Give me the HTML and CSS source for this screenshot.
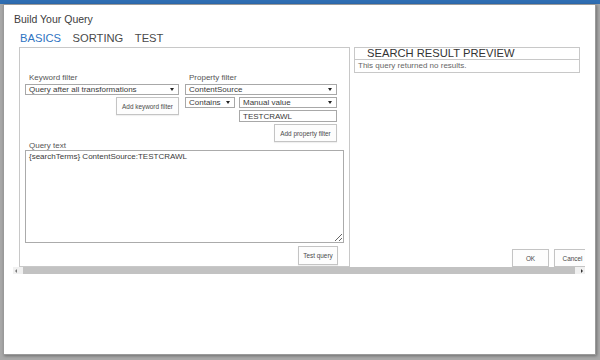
FILE: index.html
```html
<!DOCTYPE html>
<html lang="en">
<head>
  <meta charset="UTF-8">
  <meta name="viewport" content="width=device-width, initial-scale=1.0">
  <title>Build Your Query</title>
  <link rel="stylesheet" href="styles.css">
</head>
<body>

<div class="suite-bar"></div>

<div class="dialog">
  <div class="dialog-title">Build Your Query</div>

  <div class="tabs">
    <span class="tab active">BASICS</span>
    <span class="tab">SORTING</span>
    <span class="tab">TEST</span>
  </div>

  <div class="scroll-area">
    <div class="scroll-content">

      <div class="basics-panel">
        <div class="filters">
          <div class="filter-col keyword-col">
            <div class="field-label">Keyword filter</div>
            <div class="select"><span>Query after all transformations</span><span class="caret"></span></div>
            <button class="btn">Add keyword filter</button>
          </div>

          <div class="filter-col property-col">
            <div class="field-label">Property filter</div>
            <div class="select"><span>ContentSource</span><span class="caret"></span></div>
            <div class="select-row">
              <div class="select op-select"><span>Contains</span><span class="caret"></span></div>
              <div class="select value-select"><span>Manual value</span><span class="caret"></span></div>
            </div>
            <div class="text-input">TESTCRAWL</div>
            <button class="btn">Add property filter</button>
          </div>
        </div>

        <div class="field-label query-label">Query text</div>
        <textarea class="query-text" spellcheck="false">{searchTerms} ContentSource:TESTCRAWL</textarea>
        <div class="panel-actions">
          <button class="btn test-btn">Test query</button>
        </div>
      </div>

      <div class="preview-col">
        <div class="preview">
          <div class="preview-head">SEARCH RESULT PREVIEW</div>
          <div class="preview-body">This query returned no results.</div>
        </div>
        <div class="dialog-buttons">
          <button class="btn dlg-btn">OK</button>
          <button class="btn dlg-btn">Cancel</button>
        </div>
      </div>

    </div>
  </div>

  <div class="hscroll">
    <span class="arrow arrow-left"></span>
    <span class="thumb"></span>
    <span class="arrow arrow-right"></span>
  </div>
</div>

</body>
</html>
```

FILE: styles.css
```css
html, body {
  margin: 0;
  height: 360px;
  overflow: hidden;
}

body {
  background-color: #a9a9a9;
  font-family: "Liberation Sans", Arial, sans-serif;
  color: #333;
}

.suite-bar {
  height: 4px;
  background-color: #2f6eb3; /* sharepoint suite bar peeking out */
}

.dialog {
  box-sizing: border-box;
  width: 593px;
  height: 351px;
  margin-left: 3px;
  background: #fff;
  border: 1px solid #9a9a9a;
  box-shadow: 1px 1px 3px rgba(0, 0, 0, 0.35);
}

.dialog-title {
  padding: 8px 0 0 10px;
  font-size: 10.5px;
  line-height: 12px;
  color: #3c3c3c;
}

.tabs {
  display: flex;
  gap: 11.5px;
  margin: 7px 0 0 16px;
  font-size: 11.2px;
  line-height: 13px;
}

.tab {
  color: #4a4a4a;
}

.tab.active {
  color: #2e74c2;
}

.scroll-area {
  width: 572px;
  margin: 2px 0 0 9px;
  overflow: hidden;
}

.scroll-content {
  display: flex;
  gap: 4px;
  width: 640px;
  padding-left: 6px;
}

.basics-panel {
  box-sizing: border-box;
  flex: none;
  width: 331px;
  height: 220px;
  padding: 25px 4px 0 5px;
  border: 1px solid #c8c8c8;
}

.filters {
  display: flex;
  align-items: flex-start;
  gap: 6px;
}

.filter-col {
  display: flex;
  flex-direction: column;
}

.keyword-col {
  width: 154px;
}

.property-col {
  width: 152px;
}

.field-label {
  padding-left: 4px;
  font-size: 8px;
  line-height: 10px;
  color: #555;
}

.select,
.text-input {
  box-sizing: border-box;
  display: flex;
  align-items: center;
  justify-content: space-between;
  height: 11px;
  margin-top: 1px;
  padding: 0 3px;
  border: 1px solid #a8a8a8;
  background: #fff;
  font-size: 8px;
  line-height: 9px;
  color: #3a3a3a;
  white-space: nowrap;
}

.caret {
  width: 0;
  height: 0;
  margin-right: 1px;
  border-left: 2px solid transparent;
  border-right: 2px solid transparent;
  border-top: 3px solid #222;
}

.select-row {
  display: flex;
  gap: 4px;
  margin-top: 2px;
}

.select-row .select {
  margin-top: 0;
}

.op-select {
  width: 50px;
}

.value-select {
  width: 98px;
}

.text-input {
  width: 98px;
  height: 12px;
  margin-top: 2px;
  margin-left: 54px;
}

.btn {
  box-sizing: border-box;
  height: 18px;
  padding: 0;
  border: 1px solid #c4c4c4;
  background: #fdfdfd;
  font-family: "Liberation Sans", Arial, sans-serif;
  font-size: 6.4px;
  color: #4a4a4a;
  white-space: nowrap;
  box-shadow: 0 1px 1px rgba(0, 0, 0, 0.06);
}

.keyword-col .btn,
.property-col .btn {
  align-self: flex-end;
  width: 63px;
  margin-top: 2px;
}

.query-label {
  line-height: 8px;
}

.query-text {
  box-sizing: border-box;
  display: block;
  width: 319px;
  height: 93px;
  margin: 0;
  padding: 1px 3px;
  border: 1px solid #ababab;
  border-radius: 0;
  font-family: "Liberation Sans", Arial, sans-serif;
  font-size: 8px;
  line-height: 10px;
  color: #3a3a3a;
  outline: none;
}

.panel-actions {
  display: flex;
  justify-content: flex-end;
  margin-top: 3px;
  padding-right: 7px;
}

.test-btn {
  width: 40px;
  height: 19px;
}

.preview-col {
  display: flex;
  flex-direction: column;
  flex: none;
  width: 250px;
  height: 220px;
}

.preview {
  box-sizing: border-box;
  width: 226px;
  border: 1px solid #c8c8c8;
}

.preview-head {
  padding-left: 12px;
  border-bottom: 1px solid #c8c8c8;
  font-size: 11.2px;
  line-height: 11px;
  color: #333;
}

.preview-body {
  padding-left: 3px;
  font-size: 8px;
  line-height: 12px;
  color: #666;
}

.dialog-buttons {
  display: flex;
  gap: 5px;
  margin-top: auto;
  padding-left: 158px;
}

.dlg-btn {
  flex: none;
  width: 37px;
  height: 18px;
}

.hscroll {
  display: flex;
  align-items: center;
  width: 572px;
  height: 7px;
  margin-left: 9px;
  background: #f0f0f0;
}

.thumb {
  flex: 1;
  height: 7px;
  margin: 0 4px;
  background: #c2c2c2;
}

.arrow {
  width: 0;
  height: 0;
  margin: 0 2px;
  border-top: 2px solid transparent;
  border-bottom: 2px solid transparent;
}

.arrow-left {
  border-right: 2px solid #777;
}

.arrow-right {
  border-left: 2px solid #333;
}
```
